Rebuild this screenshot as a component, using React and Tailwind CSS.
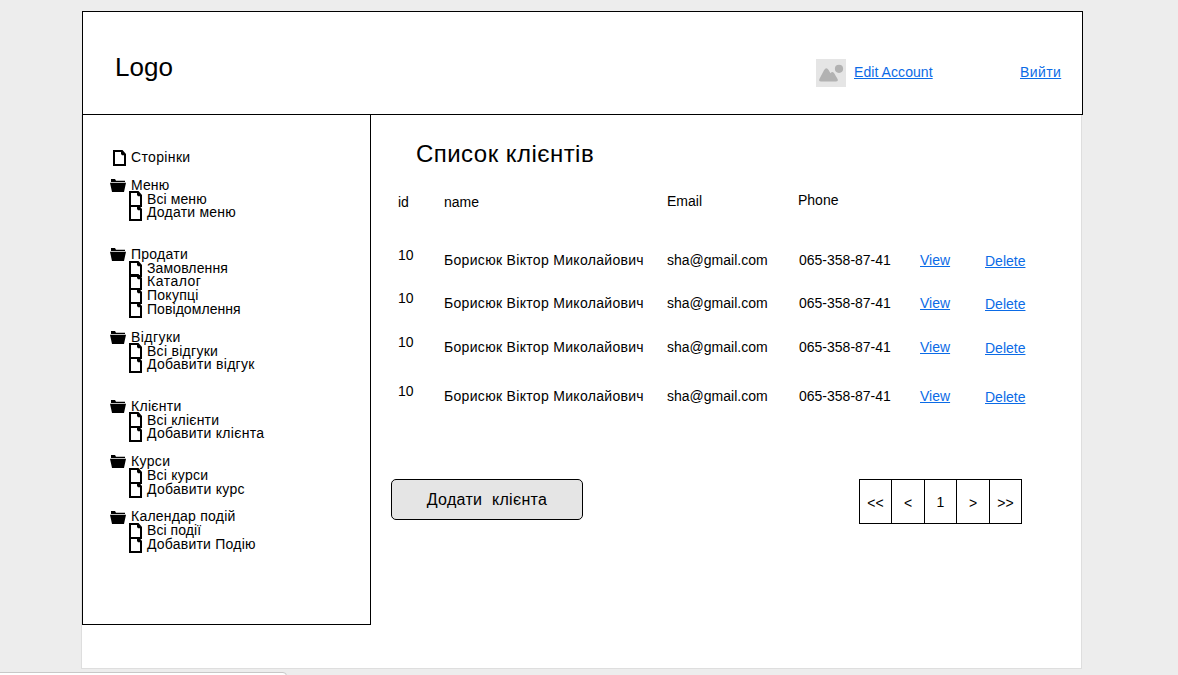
import React from "react";

const groups = [
  {
    title: "Меню",
    track: "tracking-[0.1px]",
    items: [
      ["Всі меню", "tracking-[0.1px]"],
      ["Додати меню", "tracking-[0.22px]"],
    ],
    space: "mb-[27.64px]",
  },
  {
    title: "Продати",
    track: "tracking-[0.25px]",
    items: [
      ["Замовлення", "tracking-[0.12px]"],
      ["Каталог", "tracking-[0.5px]"],
      ["Покупці", "tracking-[0.25px]"],
      ["Повідомлення", "tracking-[0.06px]"],
    ],
    space: "mb-[13.82px]",
  },
  {
    title: "Відгуки",
    track: "tracking-[0.45px]",
    items: [
      ["Всі відгуки", "tracking-[0.28px]"],
      ["Добавити відгук", "tracking-[0.3px]"],
    ],
    space: "mb-[27.64px]",
  },
  {
    title: "Клієнти",
    track: "tracking-[0.3px]",
    items: [
      ["Всі клієнти", "tracking-[0.2px]"],
      ["Добавити клієнта", "tracking-[0.28px]"],
    ],
    space: "mb-[13.82px]",
  },
  {
    title: "Курси",
    track: "tracking-[0.35px]",
    items: [
      ["Всі курси", "tracking-[0.25px]"],
      ["Добавити курс", "tracking-[0.28px]"],
    ],
    space: "mb-[13.82px]",
  },
  {
    title: "Календар подій",
    track: "tracking-[0.22px]",
    items: [
      ["Всі події", "tracking-[0.06px]"],
      ["Добавити Подію", "tracking-[0.22px]"],
    ],
    space: "",
  },
];

const rows = [
  { id: "10", gap: "mt-[43px]" },
  { id: "10", gap: "mt-[22px]" },
  { id: "10", gap: "mt-[23px]" },
  { id: "10", gap: "mt-[28px]" },
];

const columns = "grid grid-cols-[46px_223px_132px_121px_65px_60px] h-[21px] leading-4";

function FileIcon() {
  return (
    <svg className="-my-1 h-4 w-[13px] shrink-0" viewBox="0 0 13 16">
      <path fillRule="evenodd" d="M0 0H9.5L13 4V16H0ZM2 2V14H11V5.2H9L8 4V2Z" fill="#000" />
    </svg>
  );
}

function FolderIcon() {
  return (
    <svg className="-my-1 h-[13px] w-4 shrink-0" viewBox="0 0 16 13">
      <path d="M1 0H5L6 1.7H15V2.9H1Z" fill="#000" />
      <path d="M0 3.8H16L14 13H2Z" fill="#000" />
    </svg>
  );
}

function Link({ children, className = "" }) {
  return (
    <a className={"text-[#0b6be6] underline decoration-1 underline-offset-1 " + className} href="#">
      {children}
    </a>
  );
}

function FileRow({ text, track, className }) {
  return (
    <div className={"flex h-[13.82px] items-center " + className}>
      <FileIcon />
      <span className={"ml-[5px] " + track}>{text}</span>
    </div>
  );
}

export default function App() {
  return (
    <div className="flex h-[675px] w-[1178px] flex-col overflow-hidden bg-[#ededed] font-['Liberation_Sans',Arial,sans-serif] text-[14px] text-black">
      <div className="ml-[81px] mt-[11px] flex h-[658px] w-[1002px] shrink-0 flex-col">
        <header className="ml-px flex h-[104px] shrink-0 border border-black bg-white">
          <div className="ml-8 mt-[40px] w-[701px] text-[26px] leading-[30px]">Logo</div>
          <svg className="mt-[47px] h-7 w-[30px]" viewBox="0 0 30 28">
            <rect width="30" height="28" fill="#e5e5e5" />
            <path
              d="M3.4 20L8 11.2Q10.3 7.6 12.6 11L14.5 14.2Q16.2 11.8 18 14L21.6 20Q22.4 22.5 20 22.5H5Q2.5 22.5 3.4 20Z"
              fill="#b2b2b2"
            />
            <circle cx="23" cy="9.8" r="4.1" fill="#b2b2b2" />
          </svg>
          <div className="ml-2 mt-[52px] w-[166px] leading-4">
            <Link className="tracking-[0.07px]">Edit Account</Link>
          </div>
          <div className="mt-[52px] leading-4">
            <Link className="tracking-[0.4px]">Вийти</Link>
          </div>
        </header>

        <div className="mr-px flex min-h-0 flex-1 border-x border-b border-[#dedede] bg-white">
          <nav className="h-[510px] w-[289px] shrink-0 border border-t-0 border-black pl-[27px] pt-[36.15px] leading-[13.82px]">
            <FileRow text="Сторінки" track="tracking-[0.35px]" className="mb-[13.82px] pl-[3px]" />
            {groups.map((group) => (
              <div key={group.title} className={group.space}>
                <div className="flex h-[13.82px] items-center">
                  <FolderIcon />
                  <span className={"ml-[5px] " + group.track}>{group.title}</span>
                </div>
                {group.items.map(([text, track]) => (
                  <FileRow key={text} text={text} track={track} className="pl-[19px]" />
                ))}
              </div>
            ))}
          </nav>

          <main className="flex-1 pl-5">
            <h1 className="ml-[25px] mt-[25px] text-[24px] leading-7 tracking-[0.46px]">Список клієнтів</h1>
            <div className={columns + " ml-[7px] mt-[25px]"}>
              <span className="pt-[1px]">id</span>
              <span className="pt-[1px]">name</span>
              <span>Email</span>
              <span className="-ml-px -mt-px">Phone</span>
            </div>
            <div className="-mt-[10px]">
              {rows.map((row, i) => (
                <div key={i} className={columns + " ml-[7px] " + row.gap}>
                  <span>{row.id}</span>
                  <span className="whitespace-nowrap pt-[5px] tracking-[0.31px]">Борисюк Віктор Миколайович</span>
                  <span className="pt-[5px]">sha@gmail.com</span>
                  <span className="pt-[5px]">065-358-87-41</span>
                  <span className="pt-[5px]">
                    <Link>View</Link>
                  </span>
                  <span className="pt-[6px]">
                    <Link>Delete</Link>
                  </span>
                </div>
              ))}
            </div>
            <div className="mt-[75px] flex">
              <button className="h-[41px] w-[192px] whitespace-pre rounded-[5px] border border-black bg-[#e5e5e5] text-[16px] tracking-[0.33px]">
                {"Додати  клієнта"}
              </button>
              <div className="ml-[276px] grid h-[45px] w-[163px] grid-cols-[32px_33px_32px_33px_31px] grid-rows-[43px] divide-x divide-black border border-black text-center leading-[46px]">
                <span>{"<<"}</span>
                <span>{"<"}</span>
                <span className="leading-[44px]">1</span>
                <span>{">"}</span>
                <span>{">>"}</span>
              </div>
            </div>
          </main>
        </div>
      </div>
      <div className="-ml-px mt-[3px] h-5 w-[288px] shrink-0 rounded-tr border border-[#c8c8c8] bg-white" />
    </div>
  );
}
